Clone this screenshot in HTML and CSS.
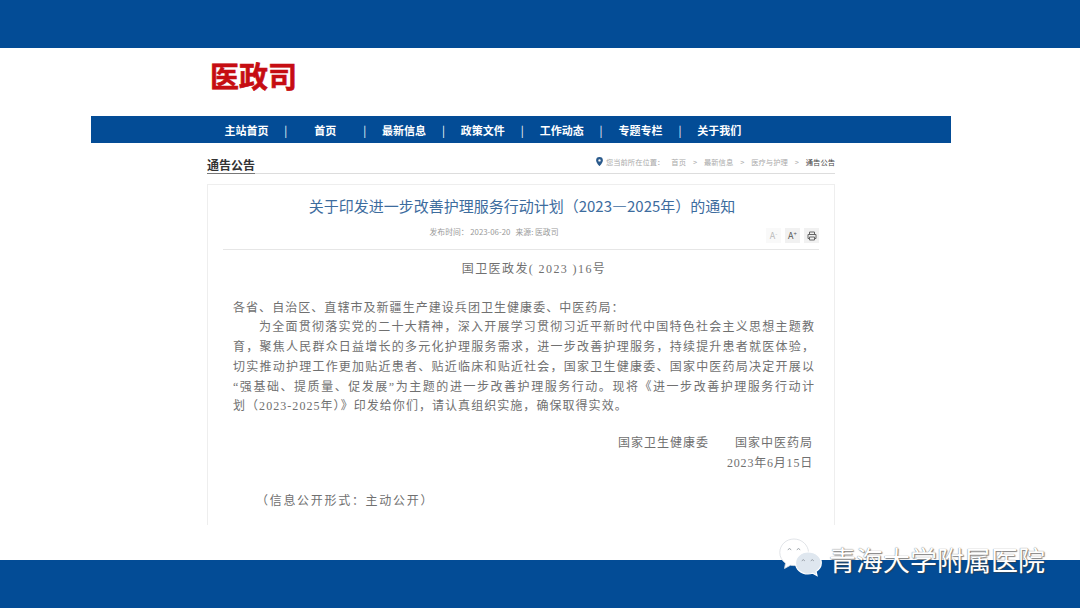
FILE: index.html
```html
<!DOCTYPE html>
<html lang="zh-CN">
<head>
  <meta charset="UTF-8" />
  <title>关于印发进一步改善护理服务行动计划（2023—2025年）的通知</title>
  <link rel="stylesheet" href="styles.css">
</head>
<body>
  <div class="slide">
    <div class="band"></div>

    <div class="page">
      <div class="logo">医政司</div>

      <ul class="nav">
        <li>主站首页</li>
        <li class="sep">|</li>
        <li>首页</li>
        <li class="sep">|</li>
        <li>最新信息</li>
        <li class="sep">|</li>
        <li>政策文件</li>
        <li class="sep">|</li>
        <li>工作动态</li>
        <li class="sep">|</li>
        <li>专题专栏</li>
        <li class="sep">|</li>
        <li>关于我们</li>
      </ul>

      <div class="column">
        <div class="section-head">
          <span class="section-title">通告公告</span>
          <div class="crumbs">
            <svg class="pin" width="7" height="9" viewBox="0 0 7 9">
              <path fill="#2a5a8c" fill-rule="evenodd" d="M3.5 0a3.4 3.4 0 0 0-3.4 3.4C.1 5.6 3.5 9 3.5 9s3.4-3.4 3.4-5.600A3.4 3.4 0 0 0 3.500 0zm0 2.200a1.200 1.200 0 1 1 0 2.400 1.200 1.200 0 0 1 0-2.400z"/>
            </svg>
            <span>您当前所在位置：</span>
            <span>首页</span>
            <span>&gt;</span>
            <span>最新信息</span>
            <span>&gt;</span>
            <span>医疗与护理</span>
            <span>&gt;</span>
            <span class="current">通告公告</span>
          </div>
        </div>

        <div class="card">
          <h1 class="title">关于印发进一步改善护理服务行动计划（2023—2025年）的通知</h1>
          <div class="meta-row">
            <div class="meta">发布时间： 2023-06-20 &nbsp; 来源: 医政司</div>
            <div class="tools">
              <span class="tool small">A<sup>-</sup></span>
              <span class="tool">A<sup>+</sup></span>
              <span class="tool">
                <svg width="10" height="10" viewBox="0 0 10 10" fill="none" stroke="#666" stroke-width="1">
                  <path d="M2.500 3.500V1h5v2.500M2.500 7.500H1v-4h8v4H7.500M2.500 6h5v3h-5z"/>
                </svg>
              </span>
            </div>
          </div>

          <div class="doc">
            <p class="doc-no">国卫医政发( 2023 )16号</p>
            <p class="greet">各省、自治区、直辖市及新疆生产建设兵团卫生健康委、中医药局：</p>
            <div class="para">
              <p class="line indent">为全面贯彻落实党的二十大精神，深入开展学习贯彻习近平新时代中国特色社会主义思想主题教</p>
              <p class="line">育，聚焦人民群众日益增长的多元化护理服务需求，进一步改善护理服务，持续提升患者就医体验，</p>
              <p class="line">切实推动护理工作更加贴近患者、贴近临床和贴近社会，国家卫生健康委、国家中医药局决定开展以</p>
              <p class="line">“强基础、提质量、促发展”为主题的进一步改善护理服务行动。现将《进一步改善护理服务行动计</p>
              <p>划（2023-2025年）》印发给你们，请认真组织实施，确保取得实效。</p>
            </div>
            <p class="sign first">国家卫生健康委　　国家中医药局</p>
            <p class="sign">2023年6月15日</p>
            <p class="open">（信息公开形式：主动公开）</p>
          </div>
        </div>
      </div>
    </div>

    <div class="band"></div>

    <div class="watermark">
      <svg width="44" height="40" viewBox="0 0 44 40" fill="none">
        <path fill="#fff" stroke="#d9dde2" stroke-width="0.8" d="M15 1C7 1 .8 7 .8 14.500c0 4.500 2.200 8.200 5.700 10.700L5.500 30.500l6-3.300c1.200.3 2.300.4 3.500.4 8 0 14.500-6 14.500-13.100S23 1 15 1z"/>
        <path fill="#dfe7ef" stroke="#fff" stroke-width="1.200" d="M29 14c-7 0-12.500 5-12.500 11S22 36 29 36c1.700 0 3.200-.3 4.700-.8l4.300 2.300-1-4c3.300-2 5.300-5 5.300-8.500 0-6-5.300-11-13.300-11z"/>
        <g stroke="#8d949c" stroke-width="0.9" stroke-linecap="round">
          <path d="M9 11.500q1.500-2.200 3 0M18 11.500q1.500-2.200 3 0M23 22.500q1.300-2 2.600 0M32 22.500q1.300-2 2.600 0"/>
        </g>
      </svg>
      <span class="wm-text">青海大学附属医院</span>
    </div>
  </div>
</body>
</html>
```

FILE: styles.css
```css
* {
  box-sizing: border-box;
}

body {
  margin: 0;
  background: white;
  font-family: "Noto Sans CJK SC", "Noto Sans", sans-serif;
}

.slide {
  position: relative;
  width: 1080px;
  height: 608px;
  display: flex;
  flex-direction: column;
  overflow: hidden;
}

.band {
  height: 48px;
  flex: none;
  background: #034c96;
}

.page {
  flex: 1;
  padding: 0 129px 0 91px;
  overflow: hidden;
}

.logo {
  height: 68px;
  padding: 8px 0 0 119px;
  font-size: 29px;
  line-height: 38px;
  font-weight: 700;
  color: #c60d12;
  -webkit-text-stroke: 0.6px #c60d12;
}

.nav {
  list-style: none;
  margin: 0;
  padding: 0 0 0 116px;
  height: 27px;
  display: flex;
  align-items: center;
  background: #034c96;
  color: white;
  font-size: 11px;
  font-weight: 700;
}

.nav li {
  width: 78.8px;
  text-align: center;
  margin-right: -39.4px;
}

.nav li.sep {
  font-weight: 400;
}

.column {
  width: 628px;
  margin-left: 116px;
}

.section-head {
  height: 31px;
  display: flex;
  justify-content: space-between;
  align-items: flex-end;
  border-bottom: 1px solid #ddd;
}

.section-title {
  font-size: 12px;
  line-height: 17px;
  font-weight: 700;
  color: #333;
  border-bottom: 1px solid #777;
  margin-bottom: -1px;
}

.crumbs {
  display: flex;
  align-items: center;
  gap: 7px;
  height: 20px;
  padding-bottom: 3px;
  font-size: 7.3px;
  color: #aaa;
}

.crumbs .pin {
  margin-right: -4px;
}

.crumbs .current {
  color: #444;
}

.card {
  margin-top: 10px;
  height: 341px;
  padding: 0 15px;
  border: 1px solid #eee;
  border-bottom: none;
}

.title {
  margin: 0;
  padding: 10px 0 0 2px;
  font-size: 15px;
  line-height: 22px;
  font-weight: 400;
  text-align: center;
  color: #3d6c9e;
}

.meta-row {
  position: relative;
  height: 33px;
  border-bottom: 1px solid #e6e6e6;
  padding: 8px 54px 0 0;
}

.meta {
  font-size: 7.8px;
  line-height: 14px;
  text-align: center;
  color: #999;
}

.tools {
  position: absolute;
  right: 0;
  top: 11px;
  display: flex;
  gap: 4px;
}

.tool {
  width: 15px;
  height: 15px;
  display: flex;
  align-items: center;
  justify-content: center;
  background: #f1f1f1;
  font-size: 9px;
  color: #555;
}

.tool.small {
  background: #f9f9f9;
  color: #bbb;
}

.tool sup {
  font-size: 6px;
  line-height: 6px;
  margin-bottom: 4px;
}

.doc {
  font-family: "Liberation Serif", "Noto Sans CJK SC", serif;
  color: #707070;
  font-size: 12px;
  letter-spacing: 1.05px;
  line-height: 19.7px;
}

.doc p {
  margin: 0;
  white-space: nowrap;
}

.doc .doc-no {
  padding: 10px 0 0 26px;
  letter-spacing: 1.4px;
  text-align: center;
}

.doc .greet {
  padding: 19px 0 0 10px;
}

.doc .para {
  padding-left: 10px;
  width: 591px;
}

.doc .para .line {
  white-space: normal;
  letter-spacing: 0;
  text-align: justify;
  text-align-last: justify;
}

.doc .para .indent {
  text-indent: 26px;
}

.doc .sign {
  text-align: right;
  padding-right: 6px;
  letter-spacing: 0.8px;
}

.doc .sign.first {
  padding-top: 17px;
  letter-spacing: 1px;
}

.doc .open {
  padding: 19px 0 0 33px;
  letter-spacing: 1.7px;
}

.watermark {
  position: absolute;
  left: 779px;
  top: 538px;
  display: flex;
  align-items: flex-start;
  gap: 6px;
}

.wm-text {
  margin-top: 4px;
  font-size: 27px;
  line-height: 36px;
  color: white;
  text-shadow: 0 0 1px #555, 1px 1px 1px rgba(60, 60, 60, 0.6);
}
```
